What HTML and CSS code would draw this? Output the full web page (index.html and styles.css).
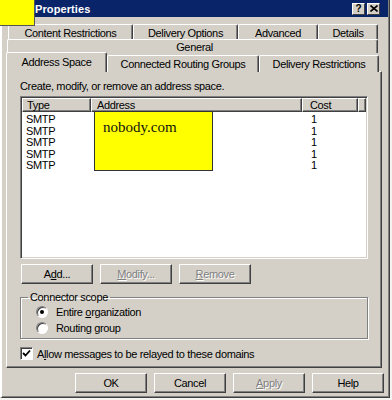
FILE: index.html
```html
<!DOCTYPE html>
<html lang="en">
<head>
    <meta charset="UTF-8">
    <title>Properties</title>
    <link rel="stylesheet" href="styles.css">
</head>
<body>
<div class="window">
    <!-- hidden connector name -->
    <div class="redact-title"></div>

    <div class="titlebar">
        <span class="title">Properties</span>
        <div class="caption-btns">
            <span class="cap-btn">?</span>
            <span class="cap-btn">
                <svg width="8" height="7" viewBox="0 0 8 7"><path d="M0.5 0.5 L7.5 6.5 M7.5 0.5 L0.5 6.5" stroke="#000" stroke-width="1.6"/></svg>
            </span>
        </div>
    </div>

    <!-- Tabs, three stacked rows -->
    <div class="tabs">
        <div class="tab-row row-back">
            <div class="tab w125">Content Restrictions</div>
            <div class="tab w105">Delivery Options</div>
            <div class="tab w80">Advanced</div>
            <div class="tab w60">Details</div>
        </div>
        <div class="tab-row row-mid">
            <div class="tab general">General</div>
        </div>
        <div class="tab-row row-front">
            <div class="tab selected w101">Address Space</div>
            <div class="tab w152">Connected Routing Groups</div>
            <div class="tab w120">Delivery Restrictions</div>
        </div>
    </div>

    <div class="panel">
        <p class="hint">Create, modify, or remove an address space.</p>

        <div class="listview">
            <div class="lv-head">
                <span class="col col-type">Type</span>
                <span class="col col-addr">Address</span>
                <span class="col col-cost">Cost</span>
                <span class="col col-rest"></span>
            </div>
            <div class="lv-body">
                <div class="lv-row"><span class="col-type">SMTP</span><span class="col-addr"></span><span class="col-cost">1</span></div>
                <div class="lv-row"><span class="col-type">SMTP</span><span class="col-addr"></span><span class="col-cost">1</span></div>
                <div class="lv-row"><span class="col-type">SMTP</span><span class="col-addr"></span><span class="col-cost">1</span></div>
                <div class="lv-row"><span class="col-type">SMTP</span><span class="col-addr"></span><span class="col-cost">1</span></div>
                <div class="lv-row"><span class="col-type">SMTP</span><span class="col-addr"></span><span class="col-cost">1</span></div>
            </div>
            <div class="redact-box">nobody.com</div>
        </div>

        <div class="btn-row">
            <button class="btn">A<u>d</u>d...</button>
            <button class="btn disabled"><u>M</u>odify...</button>
            <button class="btn disabled"><u>R</u>emove</button>
        </div>

        <fieldset class="group">
            <legend>Connector scope</legend>
            <label class="radio-row"><span class="radio checked"></span><span>Entire <u>o</u>rganization</span></label>
            <label class="radio-row"><span class="radio"></span><span>Routing <u>g</u>roup</span></label>
        </fieldset>

        <label class="check-row">
            <span class="checkbox">
                <svg width="9" height="9" viewBox="0 0 9 9"><path d="M1 4 L3.5 6.5 L8 1.5" fill="none" stroke="#000" stroke-width="1.8"/></svg>
            </span>
            <span>A<u>l</u>low messages to be relayed to these domains</span>
        </label>
    </div>

    <div class="footer">
        <button class="btn">OK</button>
        <button class="btn">Cancel</button>
        <button class="btn disabled"><u>A</u>pply</button>
        <button class="btn">Help</button>
    </div>
</div>
</body>
</html>
```

FILE: styles.css
```css
* {
    box-sizing: border-box;
}

body {
    margin: 0;
    background-color: #f4f3f0;
    font-family: "Liberation Sans", Arial, sans-serif;
    font-size: 11px;
    letter-spacing: -0.35px;
    color: #000;
}

.window {
    position: relative;
    width: 390px;
    height: 398px;
    background-color: #d4d0c8;
    border-left: 2px solid #fff;
    border-right: 1px solid #404040;
    border-bottom: 1px solid #404040;
    box-shadow: inset -1px -1px #808080;
}

/* yellow boxes that hide names */
.redact-title {
    position: absolute;
    left: -2px;
    top: 0;
    width: 35px;
    height: 26px;
    background-color: #ffff00;
    border-right: 1px solid #555;
    border-bottom: 1px solid #555;
    z-index: 2;
}

.redact-box {
    position: absolute;
    left: 73px;
    top: 14px;
    width: 119px;
    height: 60px;
    background-color: #ffff00;
    border: 1px solid #333;
    padding: 7px 0 0 8px;
    font-family: "Liberation Serif", "Times New Roman", serif;
    font-size: 15px;
    line-height: 17px;
    letter-spacing: 0;
    color: #111;
}

/* Title bar */
.titlebar {
    height: 17px;
    margin-right: 1px;
    background-color: #0a246a;
    display: flex;
    align-items: center;
    justify-content: space-between;
    padding: 0 8px 0 33px;
}

.title {
    color: #fff;
    font-weight: bold;
    letter-spacing: 0.1px;
}

.caption-btns {
    display: flex;
    gap: 2px;
}

.cap-btn {
    width: 13px;
    height: 12px;
    background-color: #d4d0c8;
    border: 1px solid;
    border-color: #fff #404040 #404040 #fff;
    display: flex;
    align-items: center;
    justify-content: center;
    font-weight: bold;
    font-size: 10px;
    letter-spacing: 0;
}

/* Tabs */
.tabs {
    margin-top: 7px;
}

.tab-row {
    display: flex;
}

.row-back {
    height: 15px;
    margin-left: 6px;
}

.row-mid {
    height: 14px;
    margin-left: 5px;
}

.row-front {
    height: 19px;
    margin-left: 4px;
    align-items: flex-end;
}

.tab {
    height: 100%;
    display: flex;
    align-items: center;
    justify-content: center;
    border-top: 1px solid #fff;
    border-left: 1px solid #fff;
    border-right: 1px solid #404040;
    box-shadow: inset -1px 0 #808080;
    border-radius: 2px 2px 0 0;
    background-color: #d4d0c8;
}

.row-back .tab {
    padding-top: 1px;
}

.row-front .tab {
    height: 17px;
}

.tab.selected {
    height: 20px;
    position: relative;
    z-index: 1;
    padding-bottom: 2px;
}

.general {
    width: 371px;
    padding-left: 4px;
}

.w60 { width: 60px; }
.w80 { width: 80px; }
.w101 { width: 101px; }
.w105 { width: 105px; }
.w120 { width: 120px; }
.w125 { width: 125px; }
.w152 { width: 152px; }

/* Tab page */
.panel {
    margin: -1px 0 0 4px;
    width: 376px;
    height: 297px;
    border-top: 1px solid #fff;
    border-left: 1px solid #fff;
    border-right: 1px solid #404040;
    border-bottom: 1px solid #404040;
    box-shadow: inset -1px -1px #808080;
    padding: 8px 0 0 13px;
}

.hint {
    margin: 0 0 3px 0;
    line-height: 13px;
}

.listview {
    position: relative;
    width: 348px;
    height: 163px;
    background-color: #fff;
    border-top: 1px solid #808080;
    border-left: 1px solid #808080;
    border-right: 1px solid #fff;
    border-bottom: 1px solid #fff;
    box-shadow: inset 1px 1px #404040, inset -1px -1px #d4d0c8;
    padding: 1px;
}

.lv-head {
    display: flex;
    height: 14px;
    background-color: #d4d0c8;
}

.lv-head .col {
    height: 100%;
    display: flex;
    align-items: center;
    border-top: 1px solid #fff;
    border-left: 1px solid #fff;
    border-right: 1px solid #404040;
    border-bottom: 1px solid #404040;
    box-shadow: inset -1px -1px #808080;
}

.col-type {
    width: 69px;
    padding-left: 4px;
}

.col-addr {
    width: 211px;
    padding-left: 5px;
}

.col-cost {
    width: 56px;
    padding-left: 7px;
}

.lv-head .col-rest {
    flex: 1;
}

.lv-body {
    padding-top: 2px;
}

.lv-row {
    display: flex;
    height: 11.6px;
    line-height: 11.6px;
}

.lv-row .col-cost {
    padding-left: 9px;
}

/* Buttons */
.btn-row {
    display: flex;
    gap: 7px;
    margin-top: 5px;
    margin-left: 1px;
}

.btn {
    width: 72px;
    height: 20px;
    padding: 0;
    font-family: inherit;
    font-size: 11px;
    letter-spacing: -0.35px;
    color: #000;
    background-color: #d4d0c8;
    border: 1px solid;
    border-color: #fff #404040 #404040 #fff;
    box-shadow: inset -1px -1px #808080;
}

.btn.disabled {
    color: #808080;
    text-shadow: 1px 1px 0 #fff;
}

/* Connector scope */
.group {
    margin: 7px 0 0 0;
    width: 348px;
    padding: 0 0 2px 0;
    border: 1px solid #808080;
    box-shadow: inset 1px 1px #fff, 1px 1px #fff;
}

.group legend {
    margin-left: 7px;
    padding: 0 2px;
    line-height: 13px;
}

.radio-row {
    display: flex;
    align-items: center;
    height: 16px;
    padding-left: 15px;
}

.radio {
    width: 12px;
    height: 12px;
    margin-right: 8px;
    border-radius: 50%;
    background-color: #fff;
    border: 1px solid;
    border-color: #808080 #fff #fff #808080;
    box-shadow: inset 1px 1px #404040;
    display: flex;
    align-items: center;
    justify-content: center;
}

.radio.checked::after {
    content: "";
    width: 4px;
    height: 4px;
    border-radius: 50%;
    background-color: #000;
}

.check-row {
    display: flex;
    align-items: center;
    height: 13px;
    margin-top: 8px;
}

.checkbox {
    width: 13px;
    height: 13px;
    margin-right: 4px;
    background-color: #fff;
    border: 1px solid;
    border-color: #808080 #fff #fff #808080;
    box-shadow: inset 1px 1px #404040;
    display: flex;
    align-items: center;
    justify-content: center;
}

/* Dialog buttons */
.footer {
    display: flex;
    justify-content: flex-end;
    gap: 7px;
    margin-top: 5px;
    padding-right: 5px;
}
```
